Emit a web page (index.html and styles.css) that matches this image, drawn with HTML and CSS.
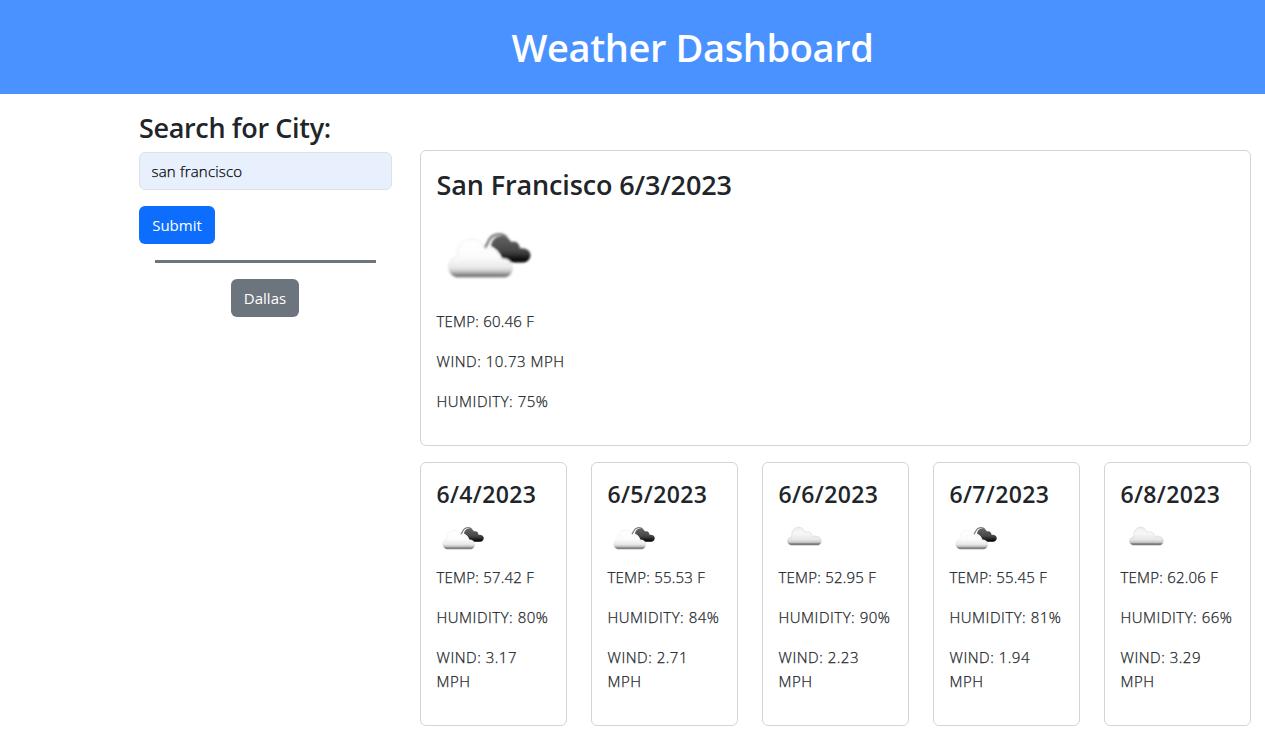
FILE: index.html
```html
<!DOCTYPE html>
<html lang="en">
<head>
<meta charset="utf-8">
<title>Weather Dashboard</title>
<link rel="stylesheet" href="styles.css">
</head>
<body>
<svg class="defs" width="0" height="0" aria-hidden="true">
  <defs>
    <linearGradient id="light" gradientUnits="userSpaceOnUse" x1="0" y1="30" x2="0" y2="69">
      <stop offset="0" stop-color="#fff"/><stop offset=".45" stop-color="#fcfcfc"/><stop offset=".73" stop-color="#eaeaea"/><stop offset=".84" stop-color="#c4c4c4"/><stop offset=".92" stop-color="#808080"/><stop offset="1" stop-color="#777"/>
    </linearGradient>
    <linearGradient id="dark" gradientUnits="userSpaceOnUse" x1="0" y1="25" x2="0" y2="53">
      <stop offset="0" stop-color="#666"/><stop offset=".6" stop-color="#484848"/><stop offset=".85" stop-color="#1c1c1c"/><stop offset="1" stop-color="#000"/>
    </linearGradient>
    <linearGradient id="single" gradientUnits="userSpaceOnUse" x1="0" y1="23" x2="0" y2="61">
      <stop offset="0" stop-color="#ededed"/><stop offset=".35" stop-color="#f8f8f8"/><stop offset=".7" stop-color="#e6e6e6"/><stop offset=".84" stop-color="#c4c4c4"/><stop offset=".93" stop-color="#666"/><stop offset="1" stop-color="#888"/>
    </linearGradient>
    <filter id="soft" x="-10%" y="-10%" width="120%" height="120%"><feGaussianBlur stdDeviation=".8"/></filter>
    <symbol id="broken" viewBox="0 0 100 100">
      <g filter="url(#soft)">
        <path d="M47 39C50 37 50 35 51.500 32C55 24.500 65 23 70 29" fill="none" stroke="#808080" stroke-width="2.600"/>
        <path d="M54 37C55 29.500 60 26.500 66 27C70 28 73 30 74 33C79 31 83 35 83 39.500C89 38.500 93.500 42 93.500 46C93.500 50 90 53.500 86 53.500H67C64 45 60 40 54 37Z" fill="url(#dark)"/>
        <path d="M20 68.500C14 67.500 11 62 11.500 57C12 52 16 48 20.500 47C19 37 26 30.500 34 30.500C42 30.500 47 35 48 40C56 37 63 43 63.500 50C70 48 76 53 75.700 59C75.500 64 72 68.500 67 68.500Z" fill="url(#light)" stroke="#d4d4d4" stroke-opacity=".6" stroke-width=".8"/>
      </g>
    </symbol>
    <symbol id="cloud" viewBox="0 0 100 100">
      <g filter="url(#soft)">
        <path d="M26 60.500C20 60.500 17 57 17 52.500C17 47 21 44 26 43.500C24 33 31 24.500 39 24.500C46 24.500 50 29 52 35C59 31 66 35 67 43C76 40 84.500 45 84.500 52C84.500 57 82 60.500 77 60.500Z" fill="url(#single)" stroke="#ccc" stroke-width="1"/>
      </g>
    </symbol>
  </defs>
</svg>
<header class="header"><h1 class="title">Weather Dashboard</h1></header>
<div class="layout">
  <aside class="sidebar">
    <h3 class="heading search-heading">Search for City:</h3>
    <input class="field" type="text" value="san francisco" aria-label="City">
    <button class="btn btn-primary">Submit</button>
    <hr class="rule">
    <button class="btn btn-secondary">Dallas</button>
  </aside>
  <main class="content">
    <section class="card current">
      <h3 class="heading city-heading">San Francisco 6/3/2023</h3>
      <svg class="icon-lg"><use href="#broken"/></svg>
      <p>TEMP: 60.46 F</p>
      <p>WIND: 10.73 MPH</p>
      <p>HUMIDITY: 75%</p>
    </section>
    <div class="forecast">
      <section class="card"><h4 class="date">6/4/2023</h4><svg class="icon-sm"><use href="#broken"/></svg><p>TEMP: 57.42 F</p><p>HUMIDITY: 80%</p><p>WIND: 3.17<br>MPH</p></section>
      <section class="card"><h4 class="date">6/5/2023</h4><svg class="icon-sm"><use href="#broken"/></svg><p>TEMP: 55.53 F</p><p>HUMIDITY: 84%</p><p>WIND: 2.71<br>MPH</p></section>
      <section class="card"><h4 class="date">6/6/2023</h4><svg class="icon-sm"><use href="#cloud"/></svg><p>TEMP: 52.95 F</p><p>HUMIDITY: 90%</p><p>WIND: 2.23<br>MPH</p></section>
      <section class="card"><h4 class="date">6/7/2023</h4><svg class="icon-sm"><use href="#broken"/></svg><p>TEMP: 55.45 F</p><p>HUMIDITY: 81%</p><p>WIND: 1.94<br>MPH</p></section>
      <section class="card"><h4 class="date">6/8/2023</h4><svg class="icon-sm"><use href="#cloud"/></svg><p>TEMP: 62.06 F</p><p>HUMIDITY: 66%</p><p>WIND: 3.29<br>MPH</p></section>
    </div>
  </main>
</div>
</body>
</html>
```
FILE: styles.css
```css
* { box-sizing: border-box; }
body { margin: 0; background: #fff; color: #212529; font: 300 15px/24px "Open Sans", "Noto Sans", sans-serif; overflow: hidden; }
.defs { display: block; }
h1, h3, h4, p { margin: 0; white-space: nowrap; }
.header { height: 94px; padding: 23px 0 0 120px; background: #4a92ff; color: #fff; text-align: center; }
.title { font-size: 38px; line-height: 48px; font-weight: 600; letter-spacing: -.4px; }
.layout { display: flex; padding-left: 139px; gap: 28px; }
.sidebar { width: 253px; padding-top: 17.4px; display: flex; flex-direction: column; align-items: flex-start; }
.heading { font-size: 27px; line-height: 33.6px; font-weight: 600; margin-bottom: 7px; }
.search-heading { letter-spacing: -.35px; }
.city-heading { padding-top: 1px; letter-spacing: -.13px; }
.field { width: 100%; height: 38px; padding: 6px 11.500px; border: 1px solid #dee2e6; border-radius: 6px; background: #e8f0fe; color: #000; font: inherit; letter-spacing: .2px; -webkit-text-stroke: .25px #000; outline: none; }
.btn { height: 38px; padding: 0; border: 0; border-radius: 6px; color: #fff; font: 400 15px/24px "Open Sans", "Noto Sans", sans-serif; }
.btn-primary { width: 76px; margin-top: 16px; background: #0d6efd; }
.rule { width: 221px; height: 3px; margin: 16px 0 16px 16px; border: 0; background: #6c757d; }
.btn-secondary { width: 68px; margin-left: 92px; background: #6c757d; }
.content { width: 831px; padding-top: 56px; }
.card { border: 1px solid #d3d4d5; border-radius: 6px; padding: 16px 15.500px; background: #fff; }
.card p { margin-bottom: 16px; letter-spacing: .52px; -webkit-text-stroke: .25px #212529; }
.card p:first-of-type { letter-spacing: .22px; }
.current { height: 296px; margin-bottom: 16px; }
.forecast { display: grid; grid-template-columns: repeat(5, 147px); gap: 24px; }
.forecast .card { height: 264px; }
.date { padding-top: 1px; font-size: 23px; line-height: 28.8px; font-weight: 600; letter-spacing: .35px; margin-bottom: 6px; }
.icon-lg { display: block; width: 100px; height: 100px; }
.icon-sm { display: block; width: 50px; height: 50px; }
```
